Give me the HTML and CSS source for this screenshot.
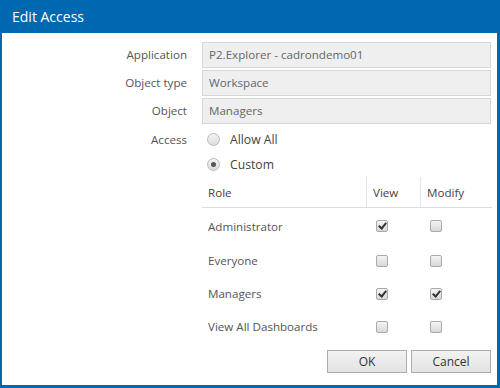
FILE: index.html
```html
<!DOCTYPE html>
<html lang="en">
<head>
<meta charset="UTF-8">
<title>Edit Access</title>
<link rel="stylesheet" href="styles.css">
</head>
<body>
<div class="dialog">
  <div class="titlebar">Edit Access</div>
  <div class="content">
    <div class="form">
      <label class="lbl">Application</label>
      <div class="field">P2.Explorer - cadrondemo01</div>
      <label class="lbl">Object type</label>
      <div class="field">Workspace</div>
      <label class="lbl">Object</label>
      <div class="field">Managers</div>
      <label class="lbl lbl-access">Access</label>
      <div class="access">
        <div class="radio-row"><span class="radio"></span>Allow All</div>
        <div class="radio-row"><span class="radio on"></span>Custom</div>
        <table class="roles">
          <thead>
            <tr><th class="c-role">Role</th><th class="c-view">View</th><th class="c-mod">Modify</th></tr>
          </thead>
          <tbody>
            <tr><td>Administrator</td><td><span class="cb on"></span></td><td><span class="cb"></span></td></tr>
            <tr><td>Everyone</td><td><span class="cb"></span></td><td><span class="cb"></span></td></tr>
            <tr><td>Managers</td><td><span class="cb on"></span></td><td><span class="cb on"></span></td></tr>
            <tr><td>View All Dashboards</td><td><span class="cb"></span></td><td><span class="cb"></span></td></tr>
          </tbody>
        </table>
      </div>
    </div>
    <div class="buttons">
      <button class="btn">OK</button>
      <button class="btn">Cancel</button>
    </div>
  </div>
</div>
</body>
</html>
```
FILE: styles.css
```css
html, body {
  margin: 0;
  padding: 0;
}

body {
  font-family: "Open Sans", "Segoe UI", sans-serif;
  font-size: 11.6px;
  color: #555;
  background: #fff;
}

.dialog {
  width: 500px;
  height: 388px;
  box-sizing: border-box;
  border: 2px solid #0067b1;
  border-top: none;
  border-right-width: 3px;
  border-bottom-width: 3px;
  display: flex;
  flex-direction: column;
}

.titlebar {
  background: #0067b1;
  color: #fff;
  height: 33px;
  margin: 0 -3px 0 -2px;
  padding-left: 12px;
  font-size: 14px;
  line-height: 33px;
}

.content {
  flex: 1;
  padding: 9px 6px 0 0;
  display: flex;
  flex-direction: column;
}

.form {
  display: grid;
  grid-template-columns: 185px 289px;
  column-gap: 15px;
  row-gap: 2px;
}

.lbl {
  text-align: right;
  line-height: 26px;
}

.lbl-access {
  margin-top: 1px;
  line-height: 25px;
}

.field {
  height: 24px;
  line-height: 24px;
  border: 1px solid #d6d6d6;
  background: #efefef;
  padding-left: 6px;
  color: #666;
}

.access {
  margin-top: 1px;
}

.radio-row {
  height: 25px;
  display: flex;
  align-items: center;
  color: #444;
  font-size: 12.2px;
}

.radio {
  width: 11px;
  height: 11px;
  border-radius: 50%;
  border: 1px solid #b9b9b9;
  background: linear-gradient(#f4f4f4, #dcdcdc);
  margin: 0 10px 0 5px;
  position: relative;
}

.radio.on::after {
  content: "";
  position: absolute;
  left: 3px;
  top: 3px;
  width: 5px;
  height: 5px;
  border-radius: 50%;
  background: #555;
}

.roles {
  width: 290px;
  border-collapse: collapse;
}

.roles th {
  font-weight: normal;
  text-align: left;
  color: #444;
  height: 30px;
  padding: 0 0 0 6px;
  border-bottom: 1px solid #dcdcdc;
}

.roles th + th {
  border-left: 1px solid #e6e6e6;
}

.c-role { width: 158px; }
.c-view { width: 47px; }

.roles td {
  height: 33px;
  padding: 0 0 0 6px;
  color: #555;
}

.roles tbody tr:first-child td {
  height: 36px;
}

.roles td + td {
  padding-left: 9px;
}

.cb {
  display: block;
  width: 10px;
  height: 10px;
  border: 1px solid #aaa;
  border-radius: 2px;
  background: linear-gradient(#f4f4f4, #d8d8d8);
  position: relative;
}

.cb.on::after {
  content: "";
  position: absolute;
  left: 3px;
  top: 0px;
  width: 3px;
  height: 6px;
  border: solid #333;
  border-width: 0 2px 2px 0;
  transform: rotate(40deg);
}

.buttons {
  margin-top: auto;
  margin-bottom: 12px;
  display: flex;
  justify-content: flex-end;
  gap: 4px;
}

.btn {
  width: 80px;
  height: 23px;
  border: 1px solid #adadad;
  background: linear-gradient(#f2f2f2, #e3e3e3);
  font-family: "Open Sans", "Segoe UI", sans-serif;
  font-size: 12px;
  color: #333;
  padding: 0;
}
```
